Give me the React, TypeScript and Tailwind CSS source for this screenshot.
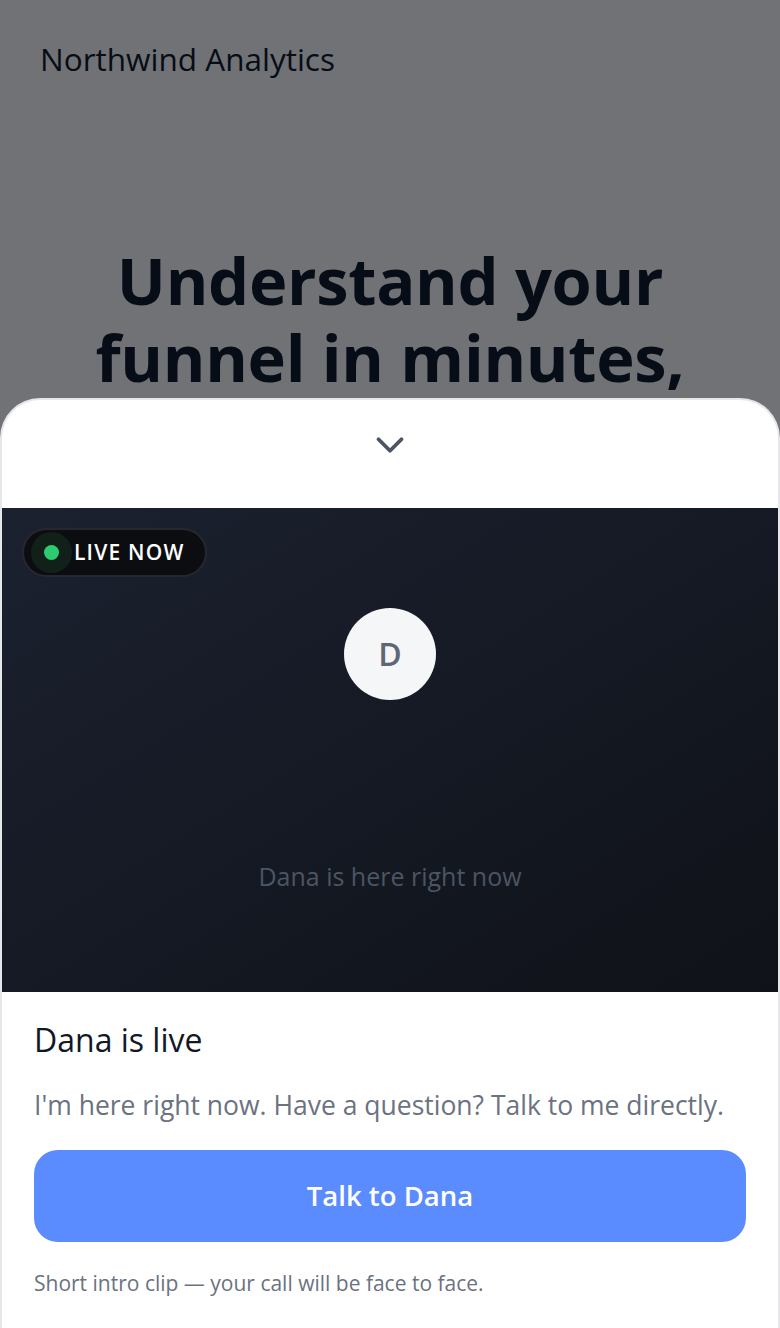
import React from 'react';
import { ChevronDown } from 'lucide-react';

const font = { fontFamily: '"Open Sans", "Noto Sans", sans-serif' };

export default function App() {
  return (
    <div className="relative h-[1328px] w-[780px] overflow-hidden bg-white text-[#111827]" style={font}>
      {/* page behind the sheet */}
      <div className="px-10 pt-[36px]">
        <div className="text-[31.5px] font-medium leading-[46px]">Northwind Analytics</div>
        <h1 className="mt-[160px] text-center text-[65px] font-bold leading-[77px] tracking-[-0.3px]">
          Understand your funnel in minutes, not weeks
        </h1>
      </div>

      {/* dim overlay */}
      <div className="absolute inset-0 bg-[#00030a]/[0.56]" />

      {/* bottom sheet */}
      <div className="absolute inset-x-0 top-[398px] bottom-0 flex flex-col rounded-t-[40px] border-2 border-b-0 border-[#e5e7eb] bg-white">
        <div className="flex h-[108px] items-center justify-center">
          <ChevronDown size={46} strokeWidth={2} className="-mt-[18px] text-[#4b5563]" />
        </div>

        <div className="relative h-[484px] bg-gradient-to-br from-[#1c2130] to-[#0f1218]">
          <div className="absolute left-5 top-5 flex h-[49px] items-center gap-[2px] rounded-full border-2 border-[#25282e] bg-[#0b0d11] pl-[7px] pr-5">
            <span className="flex h-[41px] w-[41px] items-center justify-center rounded-full bg-[#12201a]">
              <span className="h-[15px] w-[15px] rounded-full bg-[#2ecc71]" />
            </span>
            <span className="text-[21px] font-semibold tracking-[1.2px] text-white">LIVE NOW</span>
          </div>

          <div className="flex h-full flex-col items-center pt-[100px]">
            <div className="flex h-[92px] w-[92px] items-center justify-center rounded-full bg-[#f5f6f8] text-[32px] font-semibold text-[#5f6675]">
              D
            </div>
            <div className="mt-[158px] text-[25px] text-[#4b5563]">Dana is here right now</div>
          </div>
        </div>

        <div className="px-8 pt-[27px]">
          <div className="text-[32px] font-medium leading-[42px] text-[#111827]">Dana is live</div>
          <p className="mt-[26px] text-[26.5px] leading-[36px] text-[#6b7280]">
            I'm here right now. Have a question? Talk to me directly.
          </p>
          <button className="mt-[27px] flex h-[92px] w-full items-center justify-center rounded-[24px] bg-[#5b8cff] text-[27.5px] font-semibold text-white">
            Talk to Dana
          </button>
          <p className="mt-[27px] text-[21px] leading-[28px] text-[#6b7280]">
            Short intro clip — your call will be face to face.
          </p>
        </div>
      </div>
    </div>
  );
}
